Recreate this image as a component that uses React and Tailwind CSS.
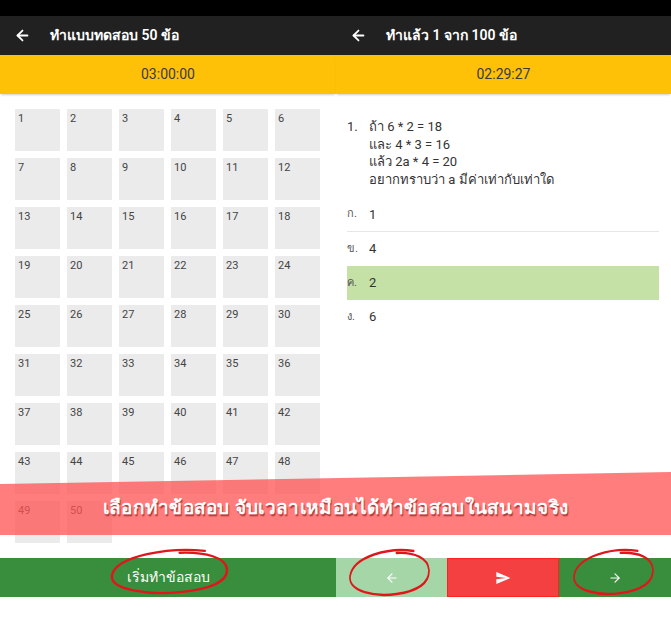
import React from "react";
import { ArrowLeft, ArrowRight } from "lucide-react";

const options = [
  { label: "ก.", value: "1" },
  { label: "ข.", value: "4" },
  { label: "ค.", value: "2", selected: true },
  { label: "ง.", value: "6" },
];

function Scribble({ className }) {
  // hand-drawn red loop around a button
  return (
    <svg className={className} viewBox="0 0 120 50" fill="none" preserveAspectRatio="none">
      <path
        d="M95 3 C60 -1 8 8 3 28 C0 44 40 49 70 46 C100 43 118 35 117 22 C116 10 96 4 70 5"
        stroke="#e0161b"
        strokeWidth="2.4"
        strokeLinecap="round"
      />
    </svg>
  );
}

function Header({ title, time }) {
  return (
    <>
      <div className="shrink-0 h-[39px] bg-[#212121] flex items-center pl-[14px]">
        <ArrowLeft size={17} color="white" strokeWidth={2.5} />
        <span className="ml-[19px] text-white text-[14px] font-semibold">{title}</span>
      </div>
      <div className="shrink-0 h-[39px] bg-[#ffc107] flex items-center justify-center text-[14px] text-[#3a3a3a] shadow-[0_2px_2px_-1px_rgba(0,0,0,0.2)]">
        {time}
      </div>
    </>
  );
}

export default function App() {
  const cells = Array.from({ length: 50 }, (_, i) => i + 1);

  return (
    <div className="relative w-[671px] h-[620px] bg-white overflow-hidden font-['Roboto','Noto_Sans','Liberation_Sans',sans-serif]">
      <div className="h-[16px] bg-black" />

      <div className="flex h-[542px]">
        {/* Left: question grid */}
        <div className="w-[336px] flex flex-col">
          <Header title="ทำแบบทดสอบ 50 ข้อ" time="03:00:00" />
          <div className="grid grid-cols-[repeat(6,45px)] gap-x-[7px] gap-y-[7px] pl-[15px] pt-[15px]">
            {cells.map((n) => (
              <div key={n} className="h-[42px] bg-[#ebebeb] text-[11px] text-[#444] pl-[3px] pt-[2px]">
                {n}
              </div>
            ))}
          </div>
        </div>

        {/* Right: question */}
        <div className="w-[335px] flex flex-col">
          <Header title="ทำแล้ว 1 จาก 100 ข้อ" time="02:29:27" />
          <div className="pl-[11px] pr-[12px] pt-[24px] text-[13px] text-[#333]">
            <div className="flex">
              <span className="w-[22px] leading-[17px]">1.</span>
              <div className="leading-[17.5px]">
                <div>ถ้า 6 * 2 = 18</div>
                <div>และ 4 * 3 = 16</div>
                <div>แล้ว 2a * 4 = 20</div>
                <div>อยากทราบว่า a มีค่าเท่ากับเท่าใด</div>
              </div>
            </div>
            <div className="mt-[10px]">
              {options.map((o, i) => (
                <div
                  key={o.label}
                  className={`flex items-center h-[34px] ${o.selected ? "bg-[#c5e1a5]" : ""} ${i === 0 ? "border-b border-[#e6e6e6]" : ""}`}
                >
                  <span className="w-[22px] text-[11px] text-[#555]">{o.label}</span>
                  <span>{o.value}</span>
                </div>
              ))}
            </div>
          </div>
        </div>
      </div>

      {/* bottom action bar */}
      <div className="flex h-[39px]">
        <div className="relative w-[336px] bg-[#388e3c] flex items-center justify-center text-white text-[14px]">
          เริ่มทำข้อสอบ
          <Scribble className="absolute left-[109px] top-[-10px] w-[121px] h-[48px]" />
        </div>
        <div className="relative w-[111px] bg-[#a5d6a7] flex items-center justify-center">
          <ArrowLeft size={14} color="white" strokeWidth={2} />
          <Scribble className="absolute left-[12px] top-[-10px] w-[83px] h-[50px]" />
        </div>
        <div className="w-[112px] bg-[#f44040] border border-[#ff2020] flex items-center justify-center">
          <svg width="16" height="16" viewBox="0 0 24 24" fill="white">
            <path d="M2.01 21L23 12 2.01 3 2 10l15 2-15 2z" />
          </svg>
        </div>
        <div className="relative w-[112px] bg-[#388e3c] flex items-center justify-center">
          <ArrowRight size={14} color="white" strokeWidth={2} />
          <Scribble className="absolute left-[13px] top-[-10px] w-[83px] h-[49px]" />
        </div>
      </div>

      {/* promo banner overlay */}
      <div className="absolute left-0 top-[472px] w-[671px] h-[63px] bg-[#ff5252]/75 [clip-path:polygon(0_12px,100%_0,100%_100%,0_100%)] flex items-end justify-center pb-[13px]">
        <span className="text-white text-[19px] font-extrabold tracking-[0.3px] [text-shadow:1px_2px_1px_rgba(120,0,0,0.55)]">
          เลือกทำข้อสอบ จับเวลาเหมือนได้ทำข้อสอบในสนามจริง
        </span>
      </div>
    </div>
  );
}
